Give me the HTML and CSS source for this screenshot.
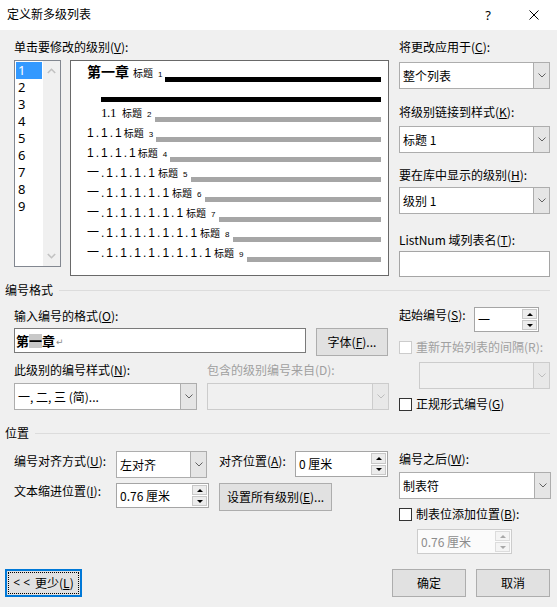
FILE: index.html
```html
<!DOCTYPE html>
<html lang="zh-CN">
<head>
<meta charset="utf-8">
<title>定义新多级列表</title>
<link rel="stylesheet" href="styles.css">
</head>
<body>
<div class="dialog">
  <header class="titlebar">
    <span class="title">定义新多级列表</span>
    <span class="tb-btn tb-help">?</span>
    <span class="tb-btn tb-close"><svg width="10" height="10" viewBox="0 0 10 10"><path d="M0.5 0.5L9.5 9.5M9.5 0.5L0.5 9.5" stroke="#000" stroke-width="1"/></svg></span>
  </header>

  <section class="top">
    <div class="col-left">
      <div class="lbl">单击要修改的级别(<u>V</u>):</div>
      <div class="levels">
        <div class="listbox">
          <div class="items">
            <div class="item sel">1</div>
            <div class="item">2</div>
            <div class="item">3</div>
            <div class="item">4</div>
            <div class="item">5</div>
            <div class="item">6</div>
            <div class="item">7</div>
            <div class="item">8</div>
            <div class="item">9</div>
          </div>
          <div class="vscroll">
            <svg class="chev" width="9" height="6" viewBox="0 0 9 6"><polyline points="0.8,5 4.5,1.3 8.2,5" fill="none" stroke="#c2c2c2" stroke-width="1.6"/></svg>
            <svg class="chev" width="9" height="6" viewBox="0 0 9 6"><polyline points="0.8,1 4.5,4.7 8.2,1" fill="none" stroke="#c2c2c2" stroke-width="1.6"/></svg>
          </div>
        </div>
        <div class="preview">
          <div class="prow"><span class="ptxt"><b class="chap">第一章</b><span class="tag t-chap">标题<span class="tn">1</span></span></span><i class="bar black"></i></div>
          <div class="prow ind"><i class="bar black flush"></i></div>
          <div class="prow ind"><span class="ptxt"><span class="serif">1.1</span><span class="tag t-serif">标题<span class="tn">2</span></span></span><i class="bar"></i></div>
          <div class="prow"><span class="ptxt">1.1.1<span class="tag">标题<span class="tn">3</span></span></span><i class="bar"></i></div>
          <div class="prow"><span class="ptxt">1.1.1.1<span class="tag">标题<span class="tn">4</span></span></span><i class="bar"></i></div>
          <div class="prow"><span class="ptxt"><span class="cjk">一</span>.1.1.1.1<span class="tag t-cjk">标题<span class="tn">5</span></span></span><i class="bar"></i></div>
          <div class="prow"><span class="ptxt"><span class="cjk">一</span>.1.1.1.1.1<span class="tag t-cjk">标题<span class="tn">6</span></span></span><i class="bar"></i></div>
          <div class="prow"><span class="ptxt"><span class="cjk">一</span>.1.1.1.1.1.1<span class="tag t-cjk">标题<span class="tn">7</span></span></span><i class="bar"></i></div>
          <div class="prow"><span class="ptxt"><span class="cjk">一</span>.1.1.1.1.1.1.1<span class="tag t-cjk">标题<span class="tn">8</span></span></span><i class="bar"></i></div>
          <div class="prow"><span class="ptxt"><span class="cjk">一</span>.1.1.1.1.1.1.1.1<span class="tag t-cjk">标题<span class="tn">9</span></span></span><i class="bar"></i></div>
        </div>
      </div>
    </div>

    <div class="col-right">
      <div class="lbl">将更改应用于(<u>C</u>):</div>
      <div class="combo h27 mt7"><span class="val">整个列表</span><span class="dd"><svg width="8" height="5" viewBox="0 0 8 5"><polyline points="0.5,0.5 4,4 7.5,0.5" fill="none" stroke="#606060" stroke-width="1"/></svg></span></div>
      <div class="lbl mt15">将级别链接到样式(<u>K</u>):</div>
      <div class="combo h27 mt6"><span class="val">标题 1</span><span class="dd"><svg width="8" height="5" viewBox="0 0 8 5"><polyline points="0.5,0.5 4,4 7.5,0.5" fill="none" stroke="#606060" stroke-width="1"/></svg></span></div>
      <div class="lbl mt14">要在库中显示的级别(<u>H</u>):</div>
      <div class="combo h27 mt4"><span class="val">级别 1</span><span class="dd"><svg width="8" height="5" viewBox="0 0 8 5"><polyline points="0.5,0.5 4,4 7.5,0.5" fill="none" stroke="#606060" stroke-width="1"/></svg></span></div>
      <div class="lbl mt18">ListNum 域列表名(<u>T</u>):</div>
      <div class="edit listnum mt3"></div>
    </div>
  </section>

  <div class="sect-title first">编号格式</div>

  <section class="fmt">
    <div class="fmt-left">
      <div class="lbl">输入编号的格式(<u>O</u>):</div>
      <div class="inrow">
        <div class="edit numfmt"><b>第<span class="hl">一</span>章</b><span class="ret">↵</span></div>
        <div class="btn font-btn">字体(<u>F</u>)...</div>
      </div>
      <div class="two">
        <div class="lbl style-lbl">此级别的编号样式(<u>N</u>):</div>
        <div class="lbl off">包含的级别编号来自(D):</div>
      </div>
      <div class="combos">
        <div class="combo h27 w-style"><span class="val">一, 二, 三 (简)...</span><span class="dd"><svg width="8" height="5" viewBox="0 0 8 5"><polyline points="0.5,0.5 4,4 7.5,0.5" fill="none" stroke="#606060" stroke-width="1"/></svg></span></div>
        <div class="combo h27 w-incl disabled"><span class="val"></span><span class="dd"><svg width="8" height="5" viewBox="0 0 8 5"><polyline points="0.5,0.5 4,4 7.5,0.5" fill="none" stroke="#bdbdbd" stroke-width="1"/></svg></span></div>
      </div>
    </div>
    <div class="fmt-right">
      <div class="startrow">
        <div class="lbl start-lbl">起始编号(<u>S</u>):</div>
        <div class="spin w-start"><span class="val">一</span><span class="spinbtns"><i class="sb up"></i><i class="sb dn"></i></span></div>
      </div>
      <div class="chk off mt7"><span class="box"></span><span>重新开始列表的间隔(R):</span></div>
      <div class="combo h27 w-restart disabled mt7"><span class="val"></span><span class="dd"><svg width="8" height="5" viewBox="0 0 8 5"><polyline points="0.5,0.5 4,4 7.5,0.5" fill="none" stroke="#bdbdbd" stroke-width="1"/></svg></span></div>
      <div class="chk mt7"><span class="box"></span><span>正规形式编号(<u>G</u>)</span></div>
    </div>
  </section>

  <div class="sect-title second">位置</div>

  <section class="pos">
    <div class="pos-left">
      <div class="posrow">
        <div class="lbl plbl">编号对齐方式(<u>U</u>):</div>
        <div class="combo h27 w-align"><span class="val">左对齐</span><span class="dd"><svg width="8" height="5" viewBox="0 0 8 5"><polyline points="0.5,0.5 4,4 7.5,0.5" fill="none" stroke="#606060" stroke-width="1"/></svg></span></div>
        <div class="lbl plbl2">对齐位置(<u>A</u>):</div>
        <div class="spin w-at"><span class="val">0 厘米</span><span class="spinbtns"><i class="sb up"></i><i class="sb dn"></i></span></div>
      </div>
      <div class="posrow r2">
        <div class="lbl plbl r2l">文本缩进位置(<u>I</u>):</div>
        <div class="spin w-indent"><span class="val">0.76 厘米</span><span class="spinbtns"><i class="sb up"></i><i class="sb dn"></i></span></div>
        <div class="btn setall">设置所有级别(<u>E</u>)...</div>
      </div>
    </div>
    <div class="pos-right">
      <div class="lbl">编号之后(<u>W</u>):</div>
      <div class="combo h27 mt5"><span class="val">制表符</span><span class="dd"><svg width="8" height="5" viewBox="0 0 8 5"><polyline points="0.5,0.5 4,4 7.5,0.5" fill="none" stroke="#606060" stroke-width="1"/></svg></span></div>
      <div class="chk mt7"><span class="box"></span><span>制表位添加位置(<u>B</u>):</span></div>
      <div class="spin w-tab disabled mt7"><span class="val">0.76 厘米</span><span class="spinbtns"><i class="sb up"></i><i class="sb dn"></i></span></div>
    </div>
  </section>

  <footer class="footer">
    <div class="btn focus less"><span class="fr"><span class="lt">&lt;&lt;</span>更少(<u>L</u>)</span></div>
    <div class="spacer"></div>
    <div class="btn okc">确定</div>
    <div class="btn okc">取消</div>
  </footer>
</div>
</body>
</html>
```

FILE: styles.css
```css
* { box-sizing: border-box; }
html, body { margin: 0; padding: 0; }
body {
  width: 557px;
  height: 607px;
  overflow: hidden;
  background: #f0f0f0;
  font: 12px/16px "Noto Sans CJK SC", "Noto Sans", sans-serif;
  color: #000;
}
u { text-decoration: underline; text-underline-offset: 1px; }

.titlebar { height: 30px; background: #fff; display: flex; align-items: center; }
.title { flex: 1; padding-left: 7px; line-height: 16px; margin-top: -2px; }
.tb-btn { width: 46px; height: 30px; display: flex; align-items: center; justify-content: center; }
.tb-help { font: 13px/16px "Noto Sans", sans-serif; margin-top: -1px; }
.tb-close svg { display: block; margin-top: -1px; }

.lbl { height: 16px; line-height: 16px; white-space: nowrap; }
.off { color: #a0a0a0; }
.mt3 { margin-top: 3px; }
.mt4 { margin-top: 4px; }
.mt5 { margin-top: 5px; }
.mt6 { margin-top: 6px; }
.mt7 { margin-top: 7px; }
.mt14 { margin-top: 14px; }
.mt15 { margin-top: 15px; }
.mt18 { margin-top: 18px; }

/* top section */
.top { display: flex; gap: 10px; padding: 9px 0 0 14px; }
.col-left { width: 375px; }
.levels { display: flex; gap: 9px; margin-top: 5px; align-items: flex-start; }

.listbox { width: 47px; height: 207px; border: 1px solid #828790; background: #fff; display: flex; }
.items { width: 28px; padding: 1px 1px 0 1px; }
.item { height: 17px; padding-left: 2px; font: 13px/17px "Noto Sans", sans-serif; }
.item.sel { background: #3399ff; color: #fff; }
.vscroll { width: 17px; background: #f0f0f0; display: flex; flex-direction: column; justify-content: space-between; align-items: center; padding: 7px 0 7px; }
.chev { display: block; }

.preview { width: 320px; height: 216px; border: 1px solid #696969; background: #fff; padding: 1px 7px 0 16px; }
.prow { height: 20px; display: flex; align-items: flex-end; }
.prow.ind { padding-left: 14px; }
.ptxt { display: block; white-space: nowrap; font: 12px/14px "Liberation Sans", sans-serif; letter-spacing: 2px; }
.ptxt > * , .tag > * { line-height: 14px; }
.chap { font: bold 14px/14px "Noto Sans CJK SC", sans-serif; letter-spacing: 0; }
.serif { font: 13px/14px "Liberation Serif", serif; letter-spacing: -0.4px; }
.cjk { font: 12px/14px "Noto Sans CJK SC", sans-serif; }
.tag { font: 10px/14px "Noto Sans CJK SC", sans-serif; letter-spacing: 0; margin-left: 0; }
.tag.t-chap { margin-left: 4px; }
.tag.t-serif { margin-left: 6px; }
.tag.t-cjk { margin-left: 1px; }
.tn { font: 8px/14px "Liberation Sans", sans-serif; margin-left: 5px; }
.bar { flex: 1; height: 5px; background: #a6a6a6; margin-left: 3px; }
.bar.black { background: #000; }
.bar.flush { margin-left: 0; }

.col-right { width: 151px; display: flex; flex-direction: column; }

/* controls */
.combo { display: flex; height: 27px; border: 1px solid #adadad; background: #fff; }
.combo .val { flex: 1; padding-left: 3px; display: flex; align-items: center; white-space: nowrap; overflow: hidden; }
.combo .dd { width: 16px; background: #e5e5e5; border-left: 1px solid #adadad; display: flex; align-items: center; justify-content: center; }
.combo .dd svg { display: block; }
.combo.disabled { border-color: #cccccc; background: #f0f0f0; }
.combo.disabled .dd { border-left-color: #cccccc; background: #e8e8e8; }

.edit { background: #fff; border: 1px solid #a5a5a5; }
.edit.listnum { height: 26px; }
.edit.numfmt { width: 292px; height: 25px; border-color: #7a7a7a; display: flex; align-items: center; padding-left: 1px; }
.numfmt b { font: bold 13px/14px "Noto Sans CJK SC", sans-serif; }
.hl { display: inline-block; background: #c8c8c8; height: 14px; line-height: 14px; }
.ret { font: 9px/14px "DejaVu Sans", sans-serif; color: #8a8a8a; margin-left: 1px; margin-top: 2px; }

.spin { display: flex; height: 25px; border: 1px solid #a5a5a5; background: #fff; }
.spin .val { flex: 1; padding-left: 3px; display: flex; align-items: center; white-space: nowrap; }
.spinbtns { width: 16px; display: flex; flex-direction: column; gap: 1px; padding: 1px 1px 1px 0; }
.sb { flex: 1; background: #ececec; border: 1px solid #c8c8c8; display: flex; align-items: center; justify-content: center; }
.sb::after { content: ""; width: 0; height: 0; border-left: 3px solid transparent; border-right: 3px solid transparent; }
.sb.up::after { border-bottom: 3px solid #000; }
.sb.dn::after { border-top: 3px solid #000; }
.spin.disabled { border-color: #cccccc; background: #fbfbfb; color: #8c8c8c; }
.spin.disabled .sb { background: #f4f4f4; border-color: #dcdcdc; }
.spin.disabled .sb.up::after { border-bottom-color: #a8a8a8; }
.spin.disabled .sb.dn::after { border-top-color: #a8a8a8; }

.btn { height: 28px; background: #e1e1e1; border: 1px solid #adadad; display: flex; align-items: center; justify-content: center; white-space: nowrap; }

.chk { display: flex; align-items: center; gap: 4px; height: 16px; line-height: 16px; white-space: nowrap; }
.chk .box { width: 13px; height: 13px; border: 1px solid #333; background: #fff; flex: none; }
.chk.off .box { border-color: #cccccc; }

/* section titles */
.sect-title { display: flex; align-items: center; gap: 6px; height: 16px; line-height: 16px; padding: 0 7px 0 5px; white-space: nowrap; }
.sect-title::after { content: ""; flex: 1; height: 1px; background: #dcdcdc; }
.sect-title.first { margin-top: 5px; }
.sect-title.second { margin-top: 13px; }

/* numbering format */
.fmt { display: flex; gap: 10px; padding-left: 14px; margin-top: 9px; }
.fmt-left { width: 375px; padding-top: 1px; }
.inrow { display: flex; gap: 10px; margin-top: 4px; align-items: flex-start; }
.font-btn { width: 72px; }
.two { display: flex; margin-top: 6px; }
.style-lbl { width: 193px; }
.combos { display: flex; gap: 10px; margin-top: 5px; }
.w-style { width: 183px; }
.w-incl { width: 182px; }
.fmt-right { width: 151px; }
.startrow { display: flex; align-items: flex-start; }
.start-lbl { width: 75px; }
.w-start { width: 65px; }
.w-restart { width: 131px; margin-left: 20px; }

/* position */
.pos { display: flex; gap: 10px; padding-left: 14px; margin-top: 10px; }
.pos-left { width: 375px; }
.posrow { display: flex; align-items: flex-start; }
.posrow.r2 { margin-top: 5px; }
.plbl { width: 102px; margin-top: 2px; }
.plbl.r2l { margin-top: 0; }
.plbl2 { width: 76px; margin-left: 12px; margin-top: 2px; }
.w-align { width: 91px; }
.w-at { width: 93px; height: 26px; }
.w-indent { width: 93px; }
.setall { width: 113px; margin-left: 10px; }
.pos-right { width: 152px; display: flex; flex-direction: column; }
.w-tab { width: 95px; margin-left: 18px; }

/* footer */
.footer { display: flex; gap: 10px; padding: 0 7px 0 5px; margin-top: 15px; }
.spacer { flex: 1; }
.btn.less { width: 77px; border: 2px solid #0078d7; padding: 1px; }
.btn.less .fr { flex: 1; align-self: stretch; border: 1px dotted #000; display: flex; align-items: center; justify-content: center; }
.lt { letter-spacing: 3px; margin-right: 2px; font-family: "Noto Sans", sans-serif; }
.btn.okc { width: 74px; }
```
